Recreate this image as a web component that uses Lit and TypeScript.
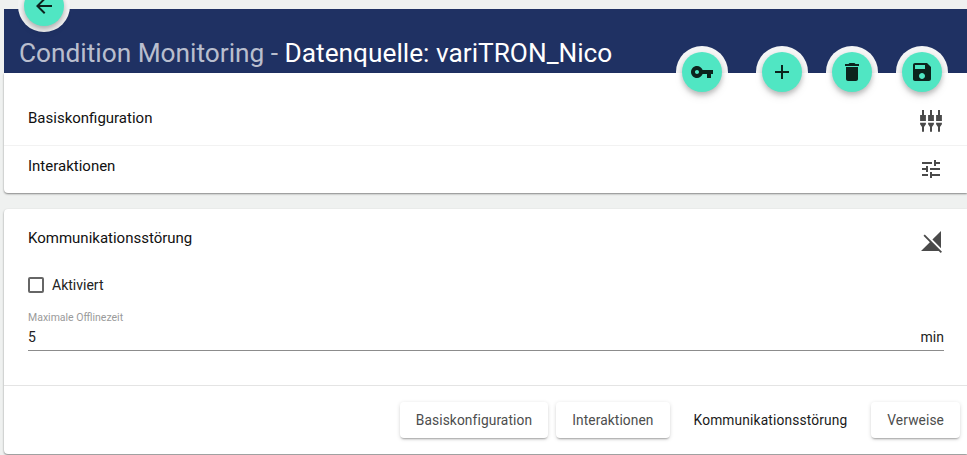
import { LitElement, html, css, svg } from "lit";
import { customElement } from "lit/decorators.js";

const rcaCol = (x: number) =>
  `M${x - 1} 1h2v5h1.900v6h-5.800V6h1.900z M${x - 2.9} 13.700h5.800v1.600l-1.900 2.700v4.700h-2v-4.700l-1.900-2.700z`;

const P = {
  back: "M20 11H7.83l5.59-5.59L12 4l-8 8 8 8 1.41-1.41L7.83 13H20v-2z",
  key: "M12.65 10C11.83 7.67 9.61 6 7 6c-3.31 0-6 2.69-6 6s2.69 6 6 6c2.61 0 4.83-1.67 5.65-4H17v4h4v-4h2v-4H12.65zM7 14c-1.1 0-2-.9-2-2s.9-2 2-2 2 .9 2 2-.9 2-2 2z",
  add: "M19 13h-6v6h-2v-6H5v-2h6V5h2v6h6v2z",
  del: "M6 19c0 1.1.9 2 2 2h8c1.1 0 2-.9 2-2V7H6v12zM19 4h-3.5l-1-1h-5l-1 1H5v2h14V4z",
  save: "M17 3H5c-1.11 0-2 .9-2 2v14c0 1.1.89 2 2 2h14c1.1 0 2-.9 2-2V7l-4-4zm-5 16c-1.66 0-3-1.34-3-3s1.34-3 3-3 3 1.34 3 3-1.34 3-3 3zm3-10H5V5h10v4z",
  tune: "M3 17v2h6v-2H3zM3 5v2h10V5H3zm10 16v-2h8v-2h-8v-2h-2v6h2zM7 9v2H3v2h4v2h2V9H7zm14 4v-2H11v2h10zm-6-4h2V7h4V5h-4V3h-2v6z",
  off: "M21 1l-8.59 8.59L21 18.18V1zM4.77 4.5L3.5 5.77l6.36 6.36L1 21h17.73l2 2L22 21.73 4.77 4.5z",
  rca: rcaCol(4) + rcaCol(12) + rcaCol(20),
};

const icon = (d: string) =>
  html`<svg class="icon" viewBox="0 0 24 24">${svg`<path d=${d}></path>`}</svg>`;

@customElement("app-root")
export class AppRoot extends LitElement {
  static styles = css`
    :host {
      display: block;
      position: relative;
      width: 967px;
      height: 455px;
      overflow: hidden;
      box-sizing: border-box;
      padding: 9px 0 0 4px;
      background: #eff1f0;
      font-family: Roboto, "Liberation Sans", sans-serif;
      color: #111;
    }
    .icon { width: 24px; height: 24px; fill: currentColor; display: block; }
    .header {
      height: 64px;
      box-sizing: border-box;
      background: #1f3163;
      padding: 27px 0 0 15px;
      font-size: 26.25px;
      line-height: 34px;
      color: rgba(255, 255, 255, 0.7);
      white-space: nowrap;
    }
    .header b { font-weight: 400; color: #fff; }
    .card {
      background: #fff;
      box-shadow: 0 1px 2px rgba(0, 0, 0, 0.45);
      border-radius: 0 0 0 4px;
    }
    .top { padding-top: 24px; }
    .row {
      height: 48px;
      box-sizing: border-box;
      display: flex;
      align-items: center;
      justify-content: space-between;
      padding: 0 24px;
      font-size: 15px;
      color: #111;
    }
    .row span { margin-bottom: 6px; }
    .row + .row { border-top: 1px solid #f2f2f2; }
    .row + .row span { margin-bottom: 7px; }
    .row + .row .icon { margin-bottom: 1px; }
    .row .icon { color: #4a4a4a; }
    .second {
      margin-top: 16px;
      border-radius: 4px 0 0 4px;
      height: 245px;
    }
    .second .row.head { padding-top: 5px; height: 53px; }
    .second .row.head span { margin-bottom: 0; }
    .second .row.head .icon { margin: 8px -1px 0 0; }
    .check {
      display: flex;
      align-items: center;
      gap: 8px;
      margin: 11px 24px 0;
      height: 24px;
      font-size: 14px;
      color: #222;
    }
    .box {
      width: 12px;
      height: 12px;
      border: 2px solid #666;
      border-radius: 2px;
    }
    .field { margin: 13px 23px 0 24px; border-bottom: 1px solid #8c8c8c; height: 40px; }
    .field small {
      display: block;
      padding-top: 1px;
      font-size: 10.5px;
      line-height: 14px;
      color: #9a9a9a;
    }
    .val {
      display: flex;
      justify-content: space-between;
      font-size: 14px;
      line-height: 20px;
      margin-top: 2px;
      color: #222;
    }
    .actions {
      margin-top: 34px;
      border-top: 1px solid #e4e4e4;
      padding: 16px 7px 0 0;
      display: flex;
      justify-content: flex-end;
      gap: 8px;
    }
    .btn {
      height: 36px;
      box-sizing: border-box;
      padding: 0 16px 1px;
      display: flex;
      align-items: center;
      border-radius: 4px;
      font-size: 13.750px;
      letter-spacing: 0.1px;
      color: #4d4d4d;
      background: #fff;
      box-shadow: 0 2px 2px -1px rgba(0,0,0,.3), 0 1px 4px rgba(0,0,0,.14);
    }
    .btn.flat { box-shadow: none; color: #1a1a1a; letter-spacing: 0.15px; }
    .fab {
      position: absolute;
      width: 40px;
      height: 40px;
      border-radius: 50%;
      background: #50e6c3;
      color: rgba(0, 0, 0, 0.85);
      display: flex;
      align-items: center;
      justify-content: center;
      box-shadow:
        0 3px 5px rgba(0, 0, 0, 0.22),
        0 5px 10px rgba(0, 0, 0, 0.08);
    }
    .ring {
      position: absolute;
      width: 52px;
      height: 52px;
      border-radius: 50%;
      background: #f4f5f5;
    }
    .clip {
      position: absolute;
      left: 0;
      right: 0;
      top: 0;
      height: 73px;
      overflow: hidden;
    }
  `;

  private fabs() {
    const items: [number, number, string][] = [
      [44, 6, P.back],
      [702, 72, P.key],
      [782, 72, P.add],
      [852, 72, P.del],
      [922, 72, P.save],
    ];
    return html`
      <div class="clip">
        ${items.map(
          ([x, y]) => html`<div class="ring" style="left:${x - 26}px;top:${y - 26}px"></div>`
        )}
      </div>
      ${items.map(
        ([x, y, d]) =>
          html`<div class="fab" style="left:${x - 20}px;top:${y - 20}px">${icon(d)}</div>`
      )}
    `;
  }

  render() {
    return html`
      <div class="header">Condition Monitoring - <b>Datenquelle: variTRON_Nico</b></div>
      <div class="card top">
        <div class="row"><span>Basiskonfiguration</span>${icon(P.rca)}</div>
        <div class="row"><span>Interaktionen</span>${icon(P.tune)}</div>
      </div>
      <div class="card second">
        <div class="row head"><span>Kommunikationsstörung</span>${icon(P.off)}</div>
        <div class="check"><div class="box"></div>Aktiviert</div>
        <div class="field">
          <small>Maximale Offlinezeit</small>
          <div class="val"><span>5</span><span>min</span></div>
        </div>
        <div class="actions">
          <div class="btn">Basiskonfiguration</div>
          <div class="btn">Interaktionen</div>
          <div class="btn flat">Kommunikationsstörung</div>
          <div class="btn">Verweise</div>
        </div>
      </div>
      ${this.fabs()}
    `;
  }
}
